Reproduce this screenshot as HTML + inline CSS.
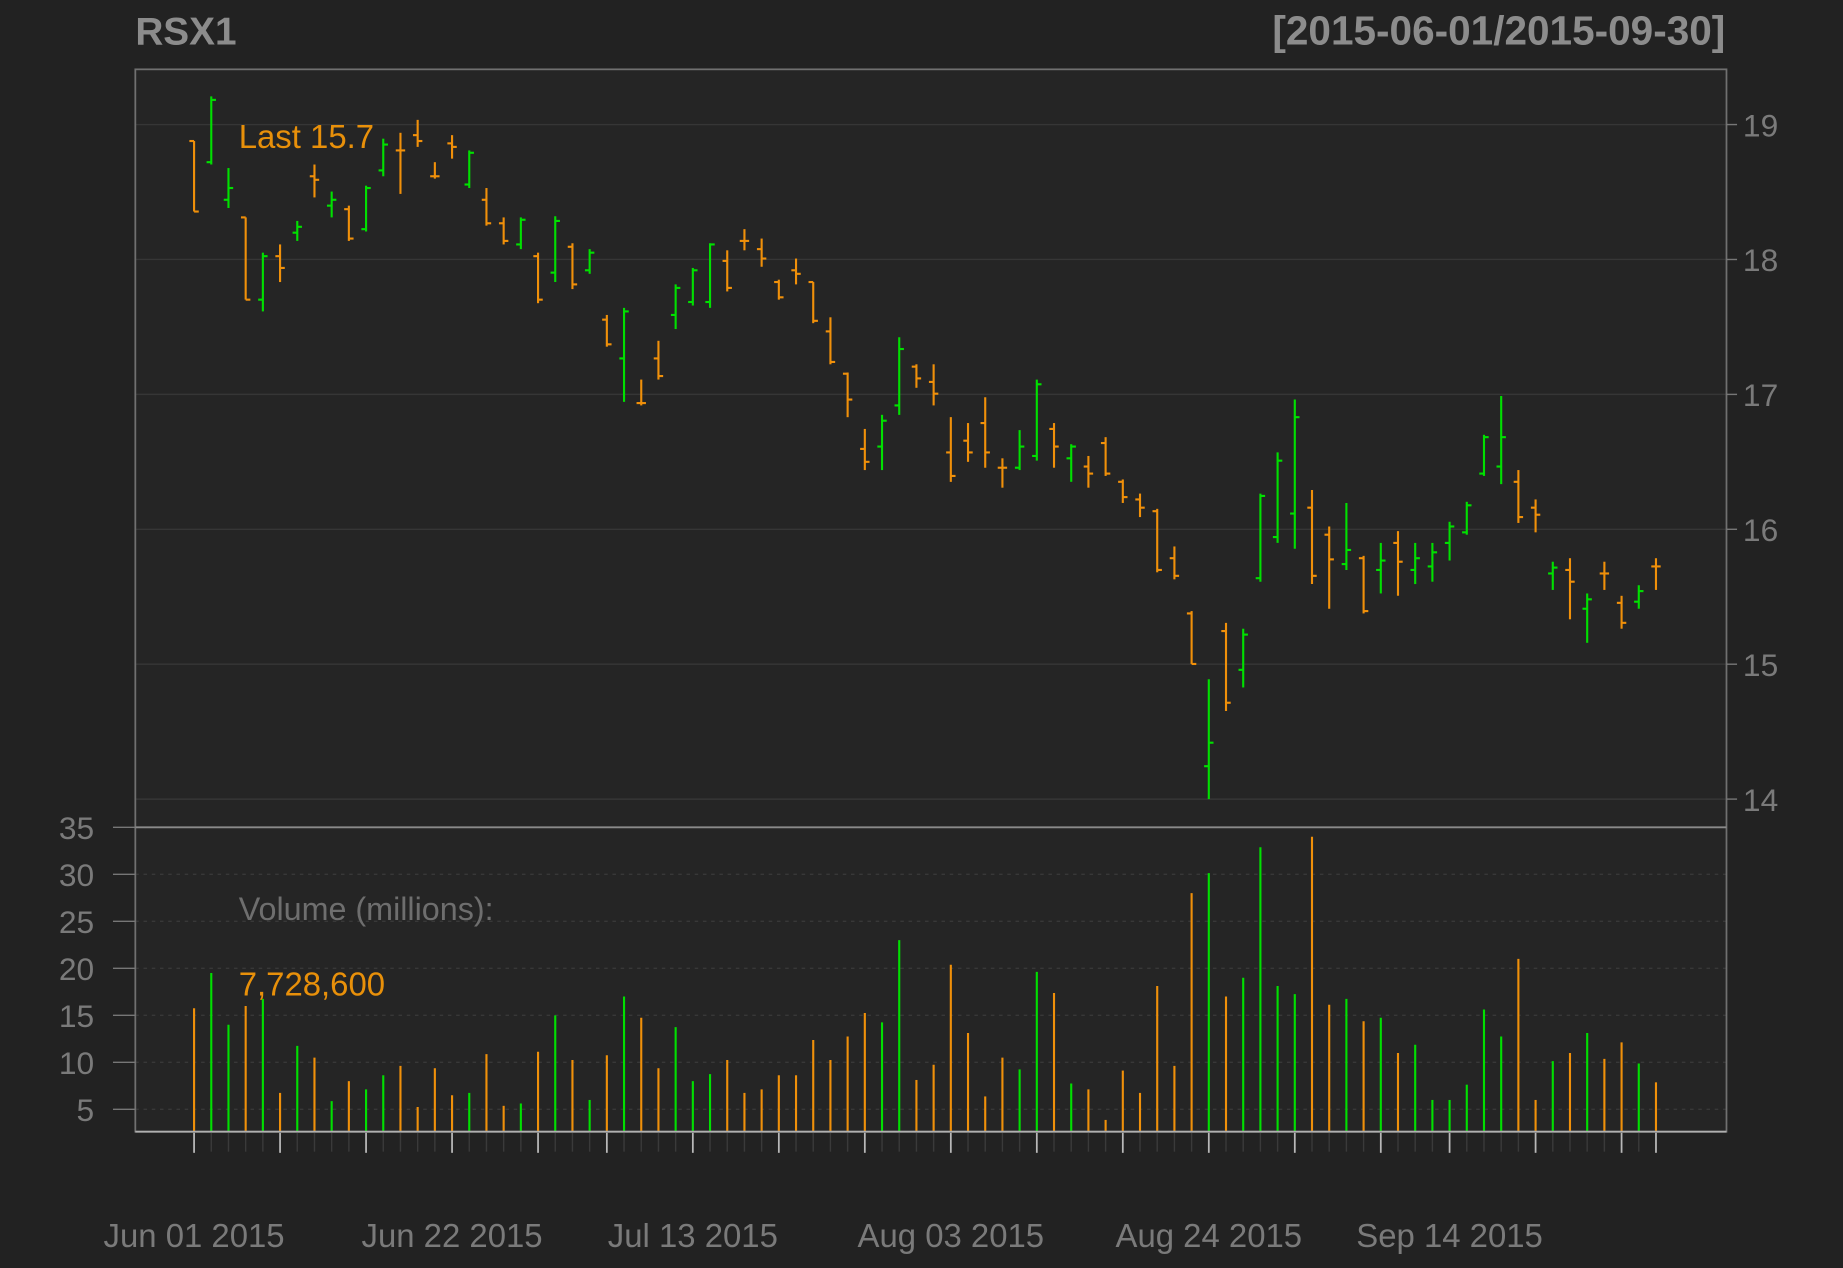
<!DOCTYPE html>
<html><head><meta charset="utf-8">
<style>
html,body{margin:0;padding:0;background:#222222;width:1843px;height:1268px;overflow:hidden}
svg{display:block}
text{font-family:"Liberation Sans",Arial,sans-serif}
</style></head>
<body>
<svg id="c" width="1843" height="1268" viewBox="0 0 1568 1079" xmlns="http://www.w3.org/2000/svg">
<rect x="0" y="0" width="1568" height="1079" fill="#222222"/>
<rect x="115" y="59" width="1354" height="904" fill="#252525"/>
<g id="grid"></g>
<g id="bars"></g>
<rect x="115" y="59" width="1354" height="904" fill="none" stroke="#707070" stroke-width="1.5"/>
<line x1="115" y1="704" x2="1469" y2="704" stroke="#8a8a8a" stroke-width="1.5"/>
<line x1="115" y1="963" x2="1469" y2="963" stroke="#b0b0b0" stroke-width="1.5"/>
<g id="axes"></g>
<text x="115" y="38" font-size="33" font-weight="bold" fill="#8c8c8c">RSX1</text>
<text x="1468" y="38" font-size="34.5" font-weight="bold" fill="#8c8c8c" text-anchor="end">[2015-06-01/2015-09-30]</text>
<text x="203" y="126" font-size="28" fill="#e8900a">Last 15.7</text>
<text x="203" y="783" font-size="27.5" fill="#6e6e6e">Volume (millions):</text>
<text x="203" y="847" font-size="28" fill="#e8900a">7,728,600</text>
</svg>
<script>
var NS="http://www.w3.org/2000/svg";
function el(p,t,a){var e=document.createElementNS(NS,t);for(var k in a)e.setAttribute(k,a[k]);p.appendChild(e);return e;}
var O="#f0900a",G="#00e000";
var d=[
[120,180,120,180,O],[82,140,138,85,G],[143,177,170,160,G],[185,255,185,255,O],[215,265,255,218,G],
[208,240,218,228,O],[188,205,198,193,G],[140,168,150,153,O],[163,185,175,170,G],[175,205,178,203,O],
[158,197,195,160,G],[118,150,145,123,G],[113,165,128,128,O],[102,125,115,120,O],[138,152,150,150,O],
[115,135,122,125,O],[128,160,157,130,G],[160,192,170,190,O],[185,208,190,205,O],[185,212,208,187,G],
[215,258,218,255,O],[184,240,232,188,G],[207,246,210,242,O],[212,233,230,215,G],[268,295,272,293,O],
[262,342,305,265,G],[323,345,343,343,O],[290,323,305,320,O],[242,280,268,245,G],[228,260,257,230,G],
[207,262,257,208,G],[213,248,222,245,O],[195,213,205,205,O],[203,227,212,220,O],[238,255,240,253,O],
[220,242,230,233,O],[240,275,240,273,O],[270,310,282,308,O],[317,355,318,340,O],[365,400,382,393,O],
[353,400,380,358,G],[287,353,345,297,G],[310,330,312,322,O],[310,345,325,335,O],[355,410,385,405,O],
[360,393,375,385,O],[338,398,360,385,O],[390,415,398,398,O],[366,400,398,380,G],[323,392,388,327,G],
[360,398,365,380,O],[378,410,390,380,G],[388,415,397,403,O],[372,405,377,403,O],[408,428,410,423,O],
[420,440,425,432,O],[433,487,435,485,O],[465,493,475,490,O],[520,565,522,565,O],[578,680,652,632,G],
[530,605,537,598,O],[535,585,570,540,G],[420,495,492,422,G],[385,462,457,392,G],[340,467,437,355,G],
[417,497,432,490,O],[448,518,455,476,O],[428,485,480,468,G],[473,522,475,520,O],[462,505,485,477,G],
[452,507,462,478,O],[462,497,485,475,G],[462,495,482,470,G],[444,477,462,448,G],[427,455,453,430,G],
[370,405,403,372,G],[337,412,397,372,G],[400,445,410,440,O],[425,453,432,438,O],[478,502,488,483,G],
[475,527,485,495,O],[505,547,518,510,G],[478,502,488,488,O],[507,535,513,530,O],[498,518,512,503,G],
[475,502,482,482,O]];
var v=[858,828,872,856,850,930,890,900,937,920,927,915,907,942,909,932,930,897,941,939,895,864,902,936,898,848,866,909,874,920,914,902,930,927,915,915,885,902,882,862,870,800,919,906,821,879,933,900,910,827,845,922,927,953,911,930,839,907,760,743,848,832,721,839,846,712,855,850,869,866,896,889,936,936,923,859,882,816,936,903,896,879,901,887,905,921];
var gr=document.getElementById("grid"),b=document.getElementById("bars"),ax=document.getElementById("axes");
for(var p=14;p<=19;p++){var y=106+(19-p)*114.8;
el(gr,"line",{x1:115,y1:y,x2:1469,y2:y,stroke:"#363636","stroke-width":1.2});
el(ax,"line",{x1:1469,y1:y,x2:1478,y2:y,stroke:"#777","stroke-width":1.2});
var t=el(ax,"text",{x:1483,y:y+10,"font-size":27,fill:"#7a7a7a"});t.textContent=p;}
for(var q=5;q<=35;q+=5){var y=704+(35-q)*8;
if(q<35)el(gr,"line",{x1:115,y1:y,x2:1469,y2:y,stroke:"#383838","stroke-width":1.2,"stroke-dasharray":"3,4"});
el(ax,"line",{x1:96,y1:y,x2:115,y2:y,stroke:"#777","stroke-width":1.2});
var t=el(ax,"text",{x:80,y:y+10,"font-size":27,fill:"#7a7a7a","text-anchor":"end"});t.textContent=q;}
var step=(1409-165)/85;
for(var i=0;i<86;i++){var x=165+step*i,a=d[i];
el(b,"line",{x1:x,y1:a[0],x2:x,y2:a[1],stroke:a[4],"stroke-width":1.8});
el(b,"line",{x1:x-4,y1:a[2],x2:x,y2:a[2],stroke:a[4],"stroke-width":1.8});
el(b,"line",{x1:x,y1:a[3],x2:x+4,y2:a[3],stroke:a[4],"stroke-width":1.8});
el(b,"line",{x1:x,y1:v[i],x2:x,y2:963,stroke:a[4],"stroke-width":1.8});
el(ax,"line",{x1:x,y1:964,x2:x,y2:980,stroke:"#3a3a3a","stroke-width":1.2});}
var maj=[0,5,10,15,20,24,29,34,39,44,49,54,59,64,69,73,78,83,85];
maj.forEach(function(i){var x=165+step*i;el(ax,"line",{x1:x,y1:964,x2:x,y2:981,stroke:"#b8b8b8","stroke-width":1.5});});
var labs=[[0,"Jun 01 2015"],[15,"Jun 22 2015"],[29,"Jul 13 2015"],[44,"Aug 03 2015"],[59,"Aug 24 2015"],[73,"Sep 14 2015"]];
labs.forEach(function(l){var t=el(ax,"text",{x:165+step*l[0],y:1061,"font-size":28,fill:"#7a7a7a","text-anchor":"middle"});t.textContent=l[1];});
</script>
</body></html>
